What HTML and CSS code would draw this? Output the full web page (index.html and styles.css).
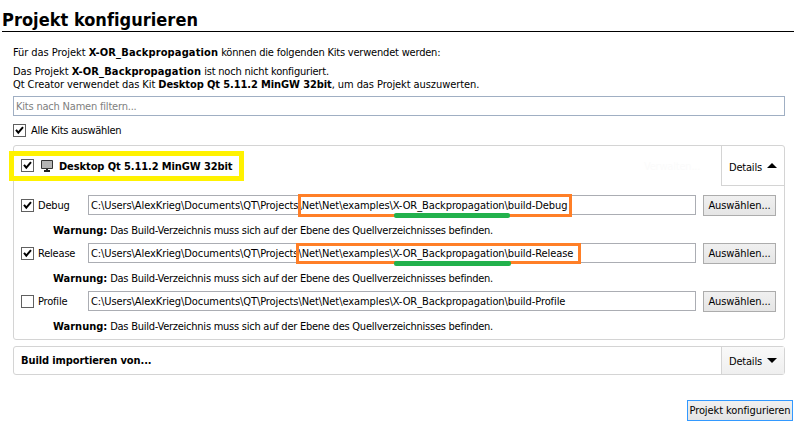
FILE: index.html
```html
<!DOCTYPE html>
<html lang="de">
<head>
<meta charset="utf-8">
<title>Projekt konfigurieren</title>
<link rel="stylesheet" href="styles.css">
</head>
<body>
<svg class="defs" width="0" height="0">
  <symbol id="check" viewBox="0 0 13 13"><path d="M3 5.8 L5.3 8.6 L10 3.2" fill="none" stroke="#000" stroke-width="2"/></symbol>
</svg>
<main class="page">
  <h1 class="title"><span>Projekt konfigurieren</span></h1>
  <div class="content">
    <p class="intro"><span class="lead">Für das Projekt </span><b class="project">X-OR_Backpropagation</b> können die folgenden Kits verwendet werden:</p>
    <p class="status"><span class="lead">Das Projekt </span><b class="project">X-OR_Backpropagation</b> ist noch nicht konfiguriert.<br><span class="second">Qt Creator verwendet das Kit <b>Desktop Qt 5.11.2 MinGW 32bit</b>, um das Projekt auszuwerten.</span></p>
    <div class="filter">Kits nach Namen filtern...</div>
    <div class="all"><span class="box"><svg><use href="#check"/></svg></span><span>Alle Kits auswählen</span></div>

    <section class="panel kit">
      <header class="kit-head">
        <div class="kit-name">
          <span class="box"><svg><use href="#check"/></svg></span>
          <svg class="monitor" viewBox="0 0 13 12"><path d="M.5 .5h11v8H.5z" fill="#b4b4b4" stroke="#333"/><path d="M5 9h2v1h2v2H3v-2h2z" fill="#222"/></svg>
          <b>Desktop Qt 5.11.2 MinGW 32bit</b>
          <i class="mark yellow"></i>
        </div>
        <span class="manage">Verwalten...</span>
        <div class="details open"><span>Details</span><svg class="arrow" viewBox="0 0 10 5"><path d="M0 5L5 0L10 5z"/></svg></div>
      </header>
      <div class="row">
        <span class="box"><svg><use href="#check"/></svg></span><span class="label">Debug</span>
        <div class="path"><span>C:\Users\AlexKrieg\Documents\QT\Projects\Net\Net\examples\X-OR_Backpropagation\build-Debug</span><i class="mark orange debug"></i><i class="mark green"></i></div>
        <span class="button">Auswählen...</span>
      </div>
      <p class="warn"><b>Warnung:</b> Das Build-Verzeichnis muss sich auf der Ebene des Quellverzeichnisses befinden.</p>
      <div class="row">
        <span class="box"><svg><use href="#check"/></svg></span><span class="label">Release</span>
        <div class="path"><span>C:\Users\AlexKrieg\Documents\QT\Projects\Net\Net\examples\X-OR_Backpropagation\build-Release</span><i class="mark orange release"></i><i class="mark green wide"></i></div>
        <span class="button">Auswählen...</span>
      </div>
      <p class="warn"><b>Warnung:</b> Das Build-Verzeichnis muss sich auf der Ebene des Quellverzeichnisses befinden.</p>
      <div class="row">
        <span class="box"></span><span class="label">Profile</span>
        <div class="path"><span>C:\Users\AlexKrieg\Documents\QT\Projects\Net\Net\examples\X-OR_Backpropagation\build-Profile</span></div>
        <span class="button">Auswählen...</span>
      </div>
      <p class="warn"><b>Warnung:</b> Das Build-Verzeichnis muss sich auf der Ebene des Quellverzeichnisses befinden.</p>
    </section>

    <section class="panel import">
      <b>Build importieren von...</b>
      <div class="details"><span>Details</span><svg class="arrow" viewBox="0 0 10 5"><path d="M0 0L5 5L10 0z"/></svg></div>
    </section>
  </div>
  <footer><span class="button primary">Projekt konfigurieren</span></footer>
</main>
</body>
</html>
```
FILE: styles.css
```css
* { box-sizing: border-box; }
body {
  margin: 0;
  background: #fff;
  color: #000;
  font: 11px/13px "DejaVu Sans Condensed", "DejaVu Sans", sans-serif;
  font-stretch: condensed;
  letter-spacing: -0.2px;
  white-space: nowrap;
}
p, h1 { margin: 0; }
b { letter-spacing: -0.1px; }
.project { letter-spacing: 0.14px; }
.lead { letter-spacing: -0.05px; }
.second { letter-spacing: -0.08px; }
.defs { position: absolute; }
.page { width: 806px; height: 436px; overflow: hidden; }
.title {
  width: 792px;
  height: 32px;
  margin-left: 2px;
  padding-top: 8px;
  border-bottom: 1px solid #000;
  font-size: 18px;
  line-height: 24px;
  letter-spacing: 0.03px;
}
.content { width: 772px; margin-left: 13px; }
.intro { padding-top: 14px; height: 33px; }
.status { height: 31px; }
.filter {
  height: 20px;
  padding: 3px 2px;
  border: 1px solid #a0afc3;
  color: #808080;
  letter-spacing: -0.2px;
}
.all { display: flex; align-items: center; gap: 5px; height: 13px; margin-top: 8px; letter-spacing: -0.3px; }
.box { flex: none; width: 13px; height: 13px; border: 1px solid #606060; background: #fff; }
.box svg { display: block; width: 13px; height: 13px; margin: -1px; }
.panel { border: 1px solid #d4d4d4; border-radius: 3px; }
.kit { height: 195px; margin-top: 8px; }
.kit-head { display: flex; height: 40px; }
.kit-name { position: relative; display: flex; align-items: center; width: 630px; padding-left: 7px; }
.kit-name .box { margin-bottom: 1px; }
.monitor { width: 13px; height: 12px; margin: 0 5px 0 7px; }
.manage { width: 77px; padding-top: 14px; color: #fbfbfb; }
.details {
  display: flex;
  align-items: center;
  gap: 5px;
  width: 63px;
  padding: 2px 0 0 7px;
  border-left: 1px solid #d4d4d4;
  background: linear-gradient(#f9f9f9, #efefef);
}
.details span { width: 33px; }
.details.open { height: 40px; padding-top: 3px; background: none; border-bottom: 1px solid #d4d4d4; }
.arrow { width: 10px; height: 5px; margin-bottom: 3px; }
.row { display: flex; align-items: center; height: 21px; padding-left: 7px; margin-top: 9px; }
.label { width: 50px; margin-left: 4px; }
.path {
  position: relative;
  width: 608px;
  height: 20px;
  margin: 0 7px 1px 0;
  padding: 3px 2px;
  border: 1px solid #abadb3;
  letter-spacing: -0.085px;
}
.button {
  width: 73px;
  height: 21px;
  border: 1px solid #acacac;
  background: linear-gradient(#f0f0f0, #e5e5e5);
  line-height: 20px;
  letter-spacing: -0.08px;
  text-align: center;
}
.warn { height: 18px; padding: 8px 0 0 39px; letter-spacing: -0.245px; }
.warn b { letter-spacing: 0; }
.mark { position: absolute; display: block; }
.yellow { left: -5px; top: 5px; width: 235px; height: 30px; border: 5px solid #fff200; }
.orange { border: 3px solid #ff7f27; }
.debug { left: 209px; top: -2px; width: 274px; height: 23px; }
.release { left: 207px; top: -1px; width: 285px; height: 21px; }
.green { left: 305px; top: 17px; width: 116px; height: 5px; border-radius: 2px; background: #22b14c; }
.green.wide { width: 117px; }
.import { display: flex; align-items: center; justify-content: space-between; height: 29px; margin-top: 6px; padding-left: 7px; }
.import .details { align-self: stretch; }
footer { display: flex; justify-content: flex-end; padding: 25px 13px 0 0; }
.button.primary { width: 106px; border-color: #3399ff; }
```
